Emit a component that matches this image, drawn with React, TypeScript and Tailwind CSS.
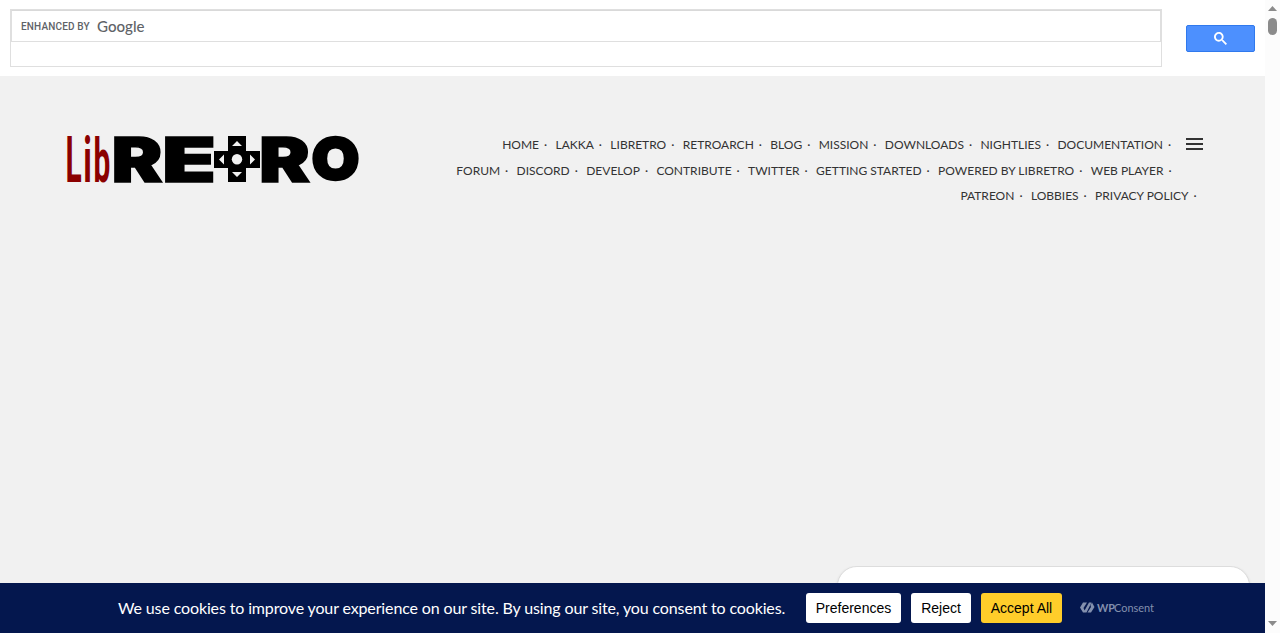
import React from "react";

const rows = [
  ["HOME", "LAKKA", "LIBRETRO", "RETROARCH", "BLOG", "MISSION", "DOWNLOADS", "NIGHTLIES", "DOCUMENTATION"],
  ["FORUM", "DISCORD", "DEVELOP", "CONTRIBUTE", "TWITTER", "GETTING STARTED", "POWERED BY LIBRETRO", "WEB PLAYER"],
  ["PATREON", "LOBBIES", "PRIVACY POLICY"],
];

const rowMargins = ["mr-[31.5px]", "mr-[31px]", "mr-[6px]"];

function SearchBar() {
  return (
    <div className="flex h-[76px] items-start bg-white pl-[10px] pt-[9px]">
      <div className="h-[58px] w-[1152px] border border-[#dfdfdf]">
        <div className="flex h-8 items-center border border-t-[#d9d9d9] border-[#dfdfdf] pl-[9px] text-[#5f6368]">
          <span className="w-[76px] whitespace-nowrap pt-[2px] font-['Roboto',sans-serif] text-[10px] font-medium leading-none tracking-[0.16px]">ENHANCED BY</span>
          <svg className="block overflow-visible" width="50" height="20" viewBox="0 0 50 20">
            <text x="0" y="15.600" textLength="47.500" lengthAdjust="spacingAndGlyphs" className="fill-[#5f6368] font-['Lato',sans-serif] text-[16px] font-medium">Google</text>
          </svg>
        </div>
      </div>
      <button className="ml-6 mt-4 flex h-[27px] w-[69px] items-center justify-center rounded-[2px] border border-[#3079ed] bg-[#4d90fe]">
        <svg width="13" height="13" viewBox="0 0 13 13" fill="#fff">
          <path d="m4.8495 7.8226c0.82666 0 1.5262-0.29146 2.0985-0.87438 0.57232-0.58292 0.86378-1.2877 0.87438-2.1144 0.010599-0.82666-0.28086-1.5262-0.87438-2.0985-0.59352-0.57232-1.293-0.86378-2.0985-0.87438-0.8055-0.010599-1.5103 0.28086-2.1144 0.87438-0.60414 0.59352-0.8956 1.293-0.87438 2.0985 0.021197 0.8055 0.31266 1.5103 0.87438 2.1144 0.56172 0.60414 1.2665 0.8956 2.1144 0.87438zm4.4695 0.2115 3.681 3.6819-1.259 1.284-3.6817-3.7 0.0019784-0.69479-0.090043-0.098846c-0.87973 0.76087-1.92 1.1413-3.1207 1.1413-1.3553 0-2.5025-0.46363-3.4417-1.3909s-1.4088-2.0686-1.4088-3.4239c0-1.3553 0.4696-2.4966 1.4088-3.4239 0.9392-0.92727 2.0864-1.3969 3.4417-1.4088 1.3553-0.011889 2.4906 0.45771 3.406 1.4088 0.9154 0.95107 1.379 2.0924 1.3909 3.4239 0 1.2126-0.38043 2.2588-1.1413 3.1385l0.098834 0.090049z" />
        </svg>
      </button>
    </div>
  );
}

function Logo() {
  return (
    <svg className="mt-[59px] ml-[66px] block shrink-0 overflow-visible" width="294" height="50" viewBox="66 135 294 50" aria-label="Libretro">
      <g className="font-['Roboto',sans-serif] font-bold" fill="#8b0000" fontSize="65">
        <text transform="translate(65.6 182.3) scale(.46 1)">L</text>
        <text transform="translate(83.300 182.3) scale(.5 .97)">i</text>
        <text transform="translate(93.400 181.8) scale(.46 .94)">b</text>
      </g>
      <g className="font-['Inter',sans-serif] font-black" fill="#000" stroke="#000" strokeWidth="1.500" fontSize="62">
        <text x="111.500" y="181.9" textLength="51" lengthAdjust="spacingAndGlyphs">R</text>
        <text x="162" y="181.9" textLength="54" lengthAdjust="spacingAndGlyphs">E</text>
        <text x="259" y="181.9" textLength="51" lengthAdjust="spacingAndGlyphs">R</text>
      </g>
      <text x="313" y="178.300" textLength="45" lengthAdjust="spacingAndGlyphs" className="font-['Inter',sans-serif] font-semibold" stroke="#000" strokeWidth="6.500" fontSize="53">O</text>
      <path d="M228 136h18v15h14v17h-14v14h-18v-14h-14v-17h14z" fill="#000" />
      <g fill="#f1f1f1">
        <circle cx="237" cy="159.3" r="5.2" />
        <path d="M232 146l5-5 5 5zM232 172l5 5 5-5zM224 154.500l-5 5 5 5zM250 154.500l5 5-5 5z" />
      </g>
    </svg>
  );
}

function Nav() {
  return (
    <nav className="ml-auto mr-[54px] mt-14 flex flex-col font-['Lato',sans-serif] text-[12px] leading-[25.5px] text-[#333]">
      {rows.map((row, i) => (
        <div key={i} className={`flex justify-end ${rowMargins[i]}`}>
          {row.map((t) => (
            <a key={t} className="flex whitespace-nowrap">
              {t}
              <span className="w-[16.5px] pl-[5px]">·</span>
            </a>
          ))}
        </div>
      ))}
    </nav>
  );
}

function CookieBar() {
  return (
    <div className="flex h-[50px] items-center bg-[#04174e] pl-[118px]">
      <p className="w-[688px] whitespace-nowrap font-['Lato',sans-serif] text-[16px] tracking-[-0.134px] text-white">
        We use cookies to improve your experience on our site. By using our site, you consent to cookies.
      </p>
      <div className="flex gap-[10px] font-['Liberation_Sans',sans-serif] text-[14px] text-black">
        <button className="h-[30px] w-[95px] rounded-[3px] bg-white">Preferences</button>
        <button className="h-[30px] w-[60px] rounded-[3px] bg-white">Reject</button>
        <button className="h-[30px] w-[81px] rounded-[3px] bg-[#ffcd2a]">Accept All</button>
      </div>
      <svg className="ml-[17px] overflow-visible" width="78" height="16" viewBox="0 0 78 16" fill="#8390ad">
        <path d="M4 2.500h4L4.500 8 6.500 12.500H4L1 7.500zM10 2.500h2.500L7.500 12.500H5.500l-.500-1zM13 2.500l2.500 4.500L12 12.500H8.500L12 7 11.500 5z" />
        <text x="18" y="11.500" textLength="18" lengthAdjust="spacingAndGlyphs" className="font-['Lato',sans-serif] text-[11px] font-bold">WP</text>
        <text x="35" y="11.500" textLength="40" lengthAdjust="spacingAndGlyphs" className="font-['Lato',sans-serif] text-[11.5px]">Consent</text>
      </svg>
    </div>
  );
}

function Scrollbar() {
  return (
    <div className="flex h-full w-[15px] flex-col items-center bg-[#fcfcfc]">
      <svg className="mt-[5px] block" width="9" height="6" viewBox="0 0 9 6"><path d="M0 6l4.500-5L9 6z" fill="#8b8b8b" /></svg>
      <div className="mt-[7px] h-[17px] w-[9px] rounded-full bg-[#8b8b8b]" />
      <svg className="mb-[6px] mt-auto block" width="9" height="6" viewBox="0 0 9 6"><path d="M0 0l4.500 5L9 0z" fill="#8b8b8b" /></svg>
    </div>
  );
}

export default function App() {
  return (
    <div className="flex h-[633px] w-[1280px] overflow-hidden bg-[#f1f1f1]">
      <div className="flex w-[1265px] flex-col">
        <SearchBar />
        <header className="relative flex items-start">
          <Logo />
          <Nav />
          <svg className="absolute right-[62px] top-[61px]" width="17" height="14" viewBox="0 0 17 14" stroke="#333" strokeWidth="2">
            <path d="M0 2h17M0 7h17M0 12h17" />
          </svg>
        </header>
        <div className="mt-auto flex h-[17px] justify-end overflow-hidden pr-[15px]">
          <div className="h-10 w-[413px] shrink-0 rounded-[20px] border border-[#ddd] bg-white shadow-sm" />
        </div>
        <CookieBar />
      </div>
      <Scrollbar />
    </div>
  );
}
